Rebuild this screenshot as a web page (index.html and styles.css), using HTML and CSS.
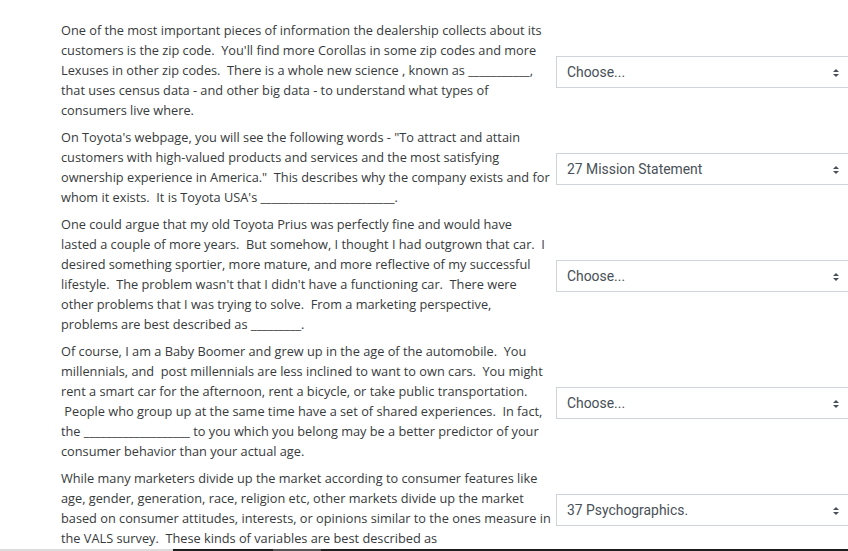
FILE: index.html
```
<!DOCTYPE html>
<html>
<head>
<meta charset="utf-8">
<link rel="stylesheet" href="styles.css">
</head>
<body>
<div class="quiz">
  <div class="row">
    <p class="text">One of the most important pieces of information the dealership collects about its<br>customers is the zip code.&nbsp; You'll find more Corollas in some zip codes and more<br>Lexuses in other zip codes.&nbsp; There is a whole new science , known as ___________,<br>that uses census data - and other big data - to understand what types of<br>consumers live where.</p>
    <div class="select"><span class="value">Choose...</span><span class="arrows"></span></div>
  </div>
  <div class="row">
    <p class="text">On Toyota's webpage, you will see the following words - "To attract and attain<br>customers with high-valued products and services and the most satisfying<br>ownership experience in America."&nbsp; This describes why the company exists and for<br>whom it exists.&nbsp; It is Toyota USA's ________________________.</p>
    <div class="select"><span class="value">27 Mission Statement</span><span class="arrows"></span></div>
  </div>
  <div class="row">
    <p class="text">One could argue that my old Toyota Prius was perfectly fine and would have<br>lasted a couple of more years.&nbsp; But somehow, I thought I had outgrown that car.&nbsp; I<br>desired something sportier, more mature, and more reflective of my successful<br>lifestyle.&nbsp; The problem wasn't that I didn't have a functioning car.&nbsp; There were<br>other problems that I was trying to solve.&nbsp; From a marketing perspective,<br>problems are best described as _________.</p>
    <div class="select"><span class="value">Choose...</span><span class="arrows"></span></div>
  </div>
  <div class="row">
    <p class="text">Of course, I am a Baby Boomer and grew up in the age of the automobile.&nbsp; You<br>millennials, and&nbsp; post millennials are less inclined to want to own cars.&nbsp; You might<br>rent a smart car for the afternoon, rent a bicycle, or take public transportation.<br>&nbsp;People who group up at the same time have a set of shared experiences.&nbsp; In fact,<br>the ___________________ to you which you belong may be a better predictor of your<br>consumer behavior than your actual age.</p>
    <div class="select"><span class="value">Choose...</span><span class="arrows"></span></div>
  </div>
  <div class="row">
    <p class="text">While many marketers divide up the market according to consumer features like<br>age, gender, generation, race, religion etc, other markets divide up the market<br>based on consumer attitudes, interests, or opinions similar to the ones measure in<br>the VALS survey.&nbsp; These kinds of variables are best described as</p>
    <div class="select"><span class="value">37 Psychographics.</span><span class="arrows"></span></div>
  </div>
</div>
<div class="taskbar"></div>
</body>
</html>
```
FILE: styles.css
```
html, body {
  margin: 0;
  padding: 0;
  background: #ffffff;
  overflow: hidden;
}
.quiz {
  padding: 20px 0 0 61px;
  display: flex;
  flex-direction: column;
  gap: 7px;
}
.row {
  display: flex;
  align-items: center;
  gap: 7px;
}
.text {
  margin: 0;
  width: 488px;
  flex: none;
  font-family: "Open Sans", "Noto Sans", sans-serif;
  font-size: 12.75px;
  line-height: 20px;
  color: #373a3c;
  white-space: nowrap;
}
.select {
  flex: none;
  width: 310px;
  height: 32px;
  box-sizing: border-box;
  margin-top: 4px;
  border: 1px solid #ced4da;
  display: flex;
  align-items: center;
  padding: 0 0 0 10px;
  font-family: Roboto, "Liberation Sans", sans-serif;
  font-size: 13.9px;
  color: #495057;
  position: relative;
}
.arrows {
  position: absolute;
  left: 276px;
  top: 12px;
  width: 6px;
  height: 8px;
}
.arrows::before, .arrows::after {
  content: "";
  position: absolute;
  left: 0;
  border-left: 3px solid transparent;
  border-right: 3px solid transparent;
}
.arrows::before {
  top: 0;
  border-bottom: 3px solid #495057;
}
.arrows::after {
  bottom: 0;
  border-top: 3px solid #495057;
}
.taskbar {
  position: fixed;
  left: 0;
  right: 0;
  bottom: 0;
  height: 2px;
  background: linear-gradient(to right, #dcdcdc 0, #dcdcdc 173px, #1e1e1e 173px, #1e1e1e 273px, #555555 273px, #555555 321px, #1e1e1e 321px);
}
```
